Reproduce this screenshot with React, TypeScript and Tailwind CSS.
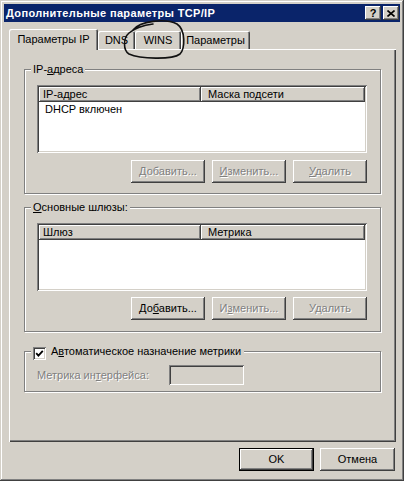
import React from 'react';

// classic 3D edges
const raised =
  'shadow-[inset_-1px_-1px_#404040,inset_1px_1px_#ffffff,inset_-2px_-2px_#808080,inset_2px_2px_#d4d0c8]';
const defaultRaised =
  'shadow-[inset_0_0_0_1px_#000000,inset_-2px_-2px_#404040,inset_2px_2px_#ffffff,inset_-3px_-3px_#808080,inset_3px_3px_#d4d0c8]';
const sunken =
  'shadow-[inset_1px_1px_#808080,inset_-1px_-1px_#ffffff,inset_2px_2px_#404040,inset_-2px_-2px_#d4d0c8]';
const headerCell =
  'shadow-[inset_-1px_-1px_#404040,inset_1px_1px_#ffffff,inset_-2px_-2px_#808080]';
const disabledText = 'text-[#808080] [text-shadow:1px_1px_0_#ffffff]';

function Btn({
  children,
  disabled = false,
  isDefault = false,
  className = '',
}: {
  children: React.ReactNode;
  disabled?: boolean;
  isDefault?: boolean;
  className?: string;
}) {
  return (
    <div
      className={`h-[23px] flex items-center justify-center bg-[#d4d0c8] ${isDefault ? defaultRaised : raised} ${disabled ? disabledText : 'text-black'} ${className}`}
    >
      {children}
    </div>
  );
}

function ListView({ cols, rows = [] }: { cols: [string, string]; rows?: string[] }) {
  return (
    <div className={`w-[330px] h-[68px] bg-white p-[2px] ${sunken}`}>
      <div className="flex h-[15px] bg-[#d4d0c8]">
        <div className={`w-[162px] pl-[4px] flex items-center ${headerCell}`}>{cols[0]}</div>
        <div className={`w-[164px] pl-[7px] flex items-center ${headerCell}`}>{cols[1]}</div>
      </div>
      {rows.map((r) => (
        <div key={r} className="h-[14px] pl-[6px] pt-[1px] flex items-center">
          {r}
        </div>
      ))}
    </div>
  );
}

function Group({
  label,
  children,
  className = '',
}: {
  label: React.ReactNode;
  children: React.ReactNode;
  className?: string;
}) {
  return (
    <div
      className={`relative w-[357px] border border-[#808080] shadow-[inset_1px_1px_#ffffff,1px_1px_#ffffff] ${className}`}
    >
      <div className="absolute left-[6px] -top-[7px] h-[13px] px-[2px] bg-[#d4d0c8] flex items-center">
        {label}
      </div>
      {children}
    </div>
  );
}

function Tab({
  children,
  active = false,
  className = '',
}: {
  children: React.ReactNode;
  active?: boolean;
  className?: string;
}) {
  return (
    <div
      className={
        active
          ? `relative z-10 h-[21px] -mb-[1px] bg-[#d4d0c8] flex items-start pt-[4px] justify-center rounded-tl-[2px] rounded-tr-[2px] shadow-[inset_1px_1px_#ffffff,inset_-1px_0_#404040,inset_-2px_0_#808080] ${className}`
          : `h-[18px] bg-[#d4d0c8] flex items-start pt-[3px] justify-center rounded-tl-[2px] rounded-tr-[2px] shadow-[inset_1px_1px_#ffffff,inset_-1px_0_#404040,inset_-2px_0_#808080] ${className}`
      }
    >
      {children}
    </div>
  );
}

export default function App() {
  return (
    <div
      className="relative w-[404px] h-[481px] bg-[#d4d0c8] p-[4px] text-[11px] leading-[13px] text-black font-['Liberation_Sans',Arial,sans-serif] shadow-[inset_-1px_-1px_#404040,inset_1px_1px_#d4d0c8,inset_-2px_-2px_#808080,inset_2px_2px_#ffffff]"
    >
      {/* Title bar */}
      <div className="h-[18px] bg-[#0a246a] flex items-center pl-[2px] pr-[1px]">
        <span className="flex-1 text-white font-bold text-[11px] tracking-[0.35px]">
          Дополнительные параметры TCP/IP
        </span>
        <div className={`w-[16px] h-[14px] bg-[#d4d0c8] flex items-center justify-center font-bold text-[11px] ${raised}`}>
          ?
        </div>
        <div className={`ml-[2px] w-[16px] h-[14px] bg-[#d4d0c8] flex items-center justify-center ${raised}`}>
          <svg width="8" height="7" viewBox="0 0 8 7">
            <path d="M0.5 0.5 L7.5 6.5 M7.5 0.5 L0.5 6.5" stroke="#000" strokeWidth="1.6" />
          </svg>
        </div>
      </div>

      {/* Tabs */}
      <div className="ml-[5px] mt-[7px] w-[387px]">
        <div className="flex items-end h-[20px]">
          <Tab active className="w-[89px]">Параметры IP</Tab>
          <Tab className="w-[37px]">DNS</Tab>
          <Tab className="w-[46px]">WINS</Tab>
          <Tab className="w-[69px]">Параметры</Tab>
        </div>

        {/* Tab page */}
        <div className="h-[393px] pt-[20px] pl-[15px] shadow-[inset_1px_1px_#ffffff,inset_-1px_-1px_#404040,inset_-2px_-2px_#808080]">
          <Group
            label={
              <span>
                IP-<u className="underline-offset-1">а</u>дреса
              </span>
            }
            className="h-[125px] pt-[15px] pl-[12px]"
          >
            <ListView cols={['IP-адрес', 'Маска подсети']} rows={['DHCP включен']} />
            <div className="w-[330px] mt-[7px] flex justify-end gap-[7px]">
              <Btn disabled className="w-[74px]">
                <span><u>Д</u>обавить...</span>
              </Btn>
              <Btn disabled className="w-[74px]">
                <span><u>И</u>зменить...</span>
              </Btn>
              <Btn disabled className="w-[74px]">
                <span><u>У</u>далить</span>
              </Btn>
            </div>
          </Group>

          <Group
            label={
              <span>
                <u>О</u>сновные шлюзы:
              </span>
            }
            className="mt-[13px] h-[125px] pt-[15px] pl-[12px]"
          >
            <ListView cols={['Шлюз', 'Метрика']} />
            <div className="w-[330px] mt-[6px] flex justify-end gap-[7px]">
              <Btn className="w-[74px]">
                <span>До<u>б</u>авить...</span>
              </Btn>
              <Btn disabled className="w-[74px]">
                <span>И<u>з</u>менить...</span>
              </Btn>
              <Btn disabled className="w-[74px]">
                <span>У<u>д</u>алить</span>
              </Btn>
            </div>
          </Group>

          <Group
            label={
              <span className="flex items-center gap-[5px] pr-[1px]">
                <span className={`w-[13px] h-[13px] bg-white flex items-center justify-center mt-[3px] ${sunken}`}>
                  <svg width="9" height="9" viewBox="0 0 9 9">
                    <path d="M1.2 4.2 L3.4 6.6 L7.8 1.8" stroke="#000" strokeWidth="1.8" fill="none" />
                  </svg>
                </span>
                <span>
                  А<u>в</u>томатическое назначение метрики
                </span>
              </span>
            }
            className="mt-[19px] h-[41px] pt-[13px] pl-[12px]"
          >
            <div className="flex items-center">
              <span className={`w-[132px] ${disabledText}`}>
                Метрика ин<u>т</u>ерфейса:
              </span>
              <div className={`w-[75px] h-[20px] bg-[#d4d0c8] ${sunken}`} />
            </div>
          </Group>
        </div>
      </div>

      {/* Dialog buttons */}
      <div className="mt-[6px] pr-[5px] flex justify-end gap-[6px]">
        <Btn isDefault className="w-[75px]">OK</Btn>
        <Btn className="w-[75px]">Отмена</Btn>
      </div>

      {/* hand-drawn mark around the WINS tab */}
      <svg
        className="absolute left-0 top-0 pointer-events-none"
        width="404"
        height="481"
        viewBox="0 0 404 481"
      >
        <path
          d="M133 30 C140 21 165 18 177 24 C186 30 185 49 180 54 C172 60 140 59 129 54 C123 50 123 38 129 33 C135 28 145 25 153 24"
          stroke="#111"
          strokeWidth="1.6"
          fill="none"
          strokeLinecap="round"
        />
      </svg>
    </div>
  );
}
